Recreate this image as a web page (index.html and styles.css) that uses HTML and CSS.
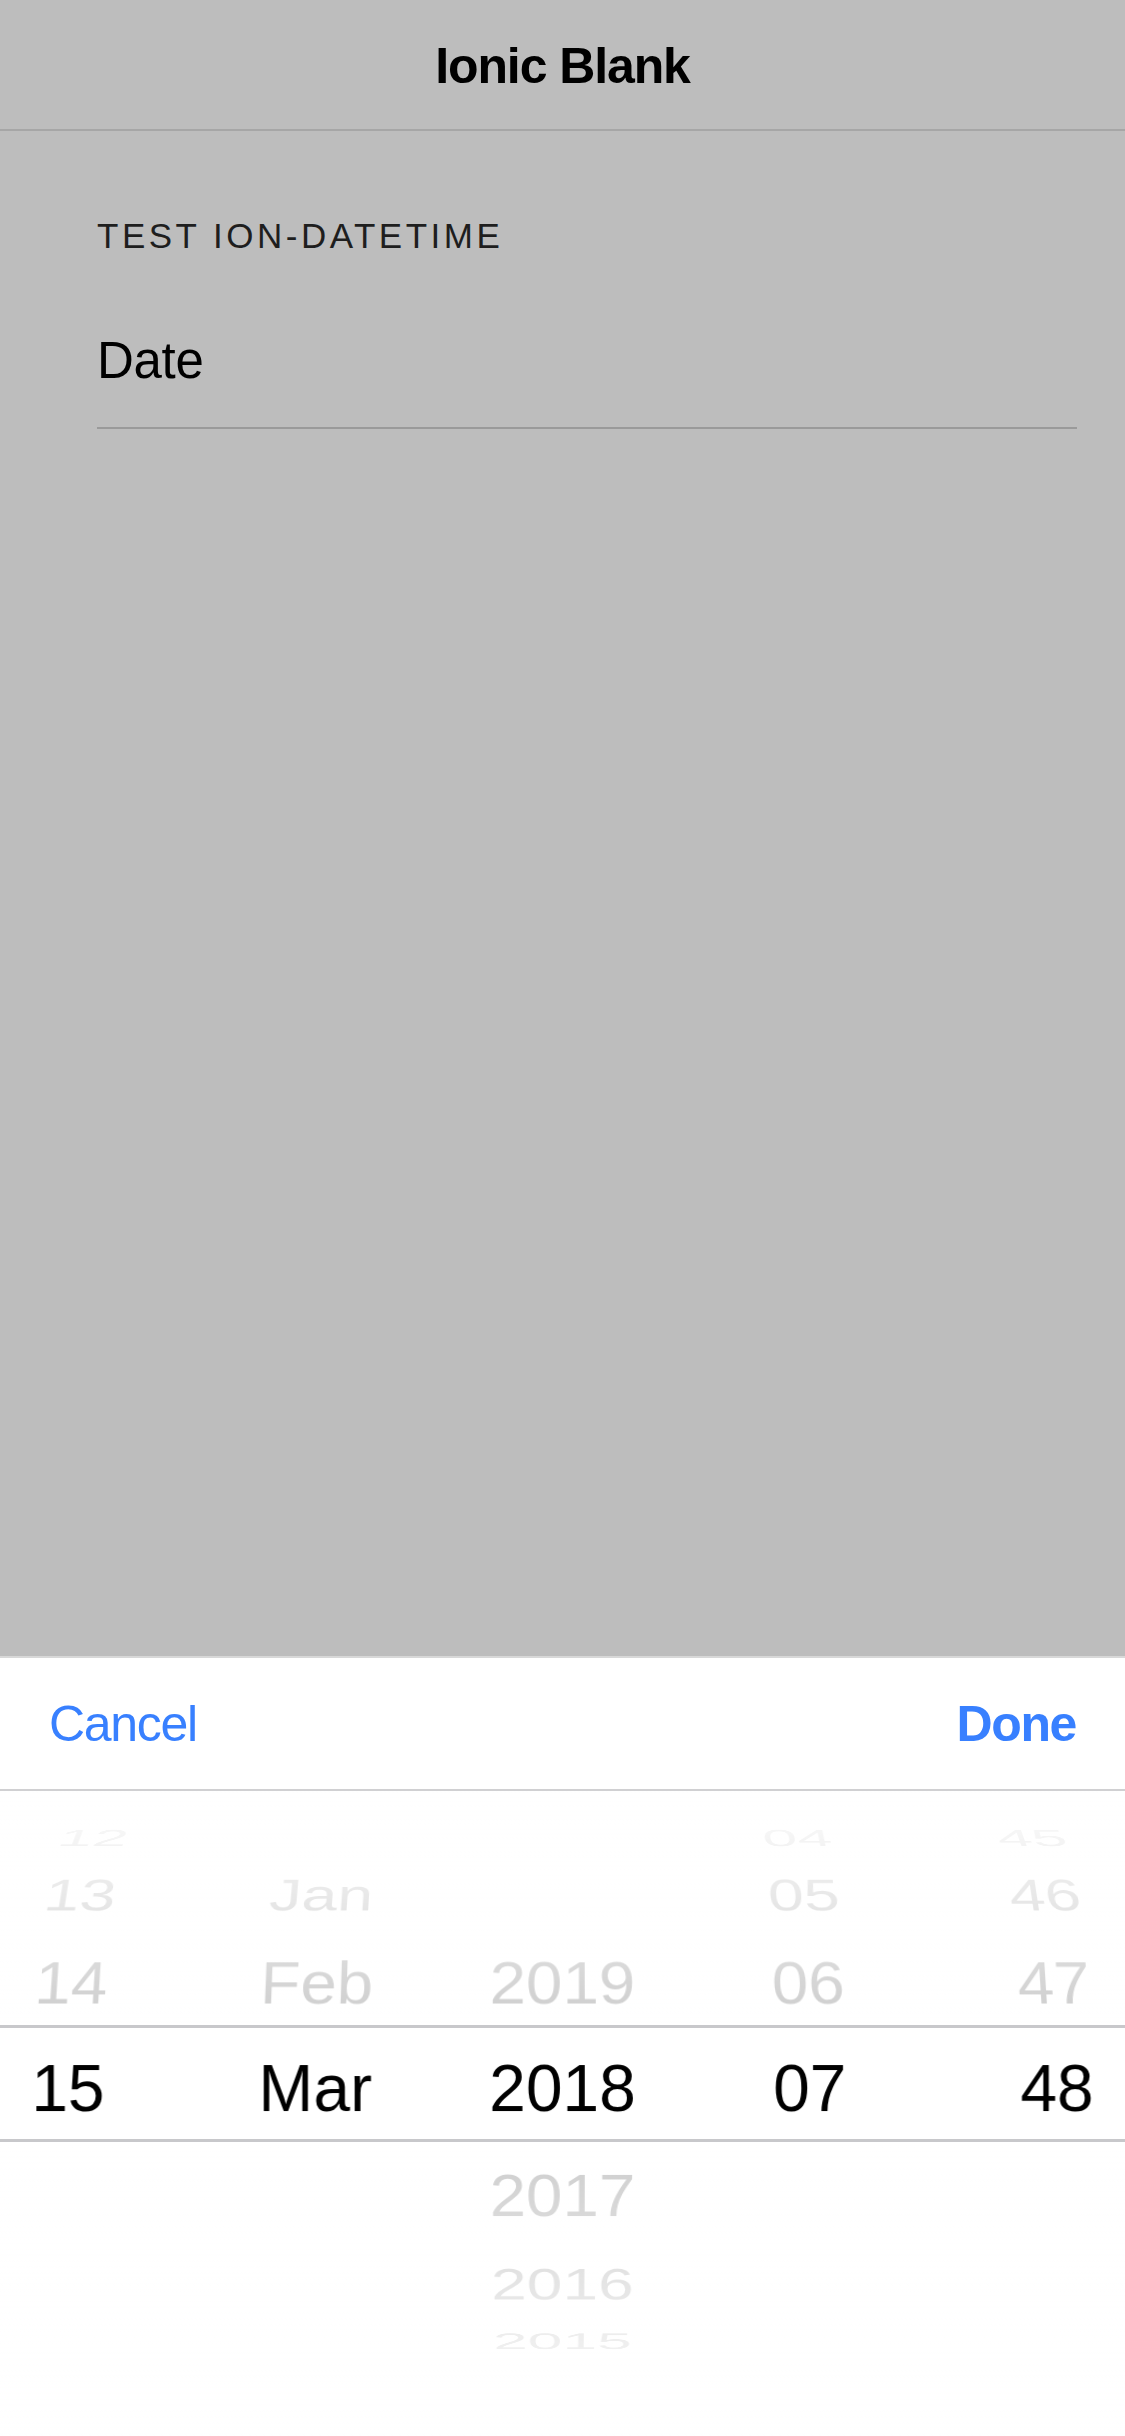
FILE: index.html
```html
<!DOCTYPE html>
<html lang="en">
<head>
<meta charset="utf-8">
<title>Ionic Blank</title>
<link rel="stylesheet" href="styles.css">
</head>
<body>
<div class="app">
  <header class="topbar">
    <h1 class="title">Ionic Blank</h1>
  </header>
  <main class="content">
    <div class="list-header">Test ion-datetime</div>
    <div class="item">
      <span class="item-label">Date</span>
    </div>
  </main>
  <section class="picker">
    <div class="picker-toolbar">
      <button class="pbtn">Cancel</button>
      <button class="pbtn pbtn-strong">Done</button>
    </div>
    <div class="wheel">
      <div class="cols">
        <div class="col">
          <div class="opt a3">12</div>
          <div class="opt a2">13</div>
          <div class="opt a1">14</div>
          <div class="opt a0">15</div>
        </div>
        <div class="col">
          <div class="opt a2">Jan</div>
          <div class="opt a1">Feb</div>
          <div class="opt a0">Mar</div>
        </div>
        <div class="col">
          <div class="opt a1">2019</div>
          <div class="opt a0">2018</div>
          <div class="opt b1">2017</div>
          <div class="opt b2">2016</div>
          <div class="opt b3">2015</div>
        </div>
        <div class="col">
          <div class="opt a3">04</div>
          <div class="opt a2">05</div>
          <div class="opt a1">06</div>
          <div class="opt a0">07</div>
        </div>
        <div class="col">
          <div class="opt a3">45</div>
          <div class="opt a2">46</div>
          <div class="opt a1">47</div>
          <div class="opt a0">48</div>
        </div>
      </div>
      <div class="shade-above"></div>
      <div class="shade-below"></div>
    </div>
  </section>
</div>
</body>
</html>
```

FILE: styles.css
```css
* { box-sizing: border-box; }

html, body {
  margin: 0;
  padding: 0;
}

body {
  width: 1125px;
  height: 2436px;
  font-family: "Liberation Sans", Arial, Helvetica, sans-serif;
  background: #bdbdbd;
  overflow: hidden;
}

.app {
  display: flex;
  flex-direction: column;
  height: 2436px;
  background: #bdbdbd;
}

.topbar {
  height: 131px;
  flex: none;
  border-bottom: 2px solid #a6a6a6;
  padding-top: 3px;
  display: flex;
  align-items: center;
  justify-content: center;
}

.title {
  margin: 0;
  font-size: 50px;
  line-height: 60px;
  font-weight: 700;
  color: #000;
  letter-spacing: -1.1px;
}

.content {
  flex: 1;
  padding-top: 85px;
}

.list-header {
  margin-left: 97px;
  font-size: 35px;
  line-height: 40px;
  height: 40px;
  text-transform: uppercase;
  letter-spacing: 3.5px;
  color: #1e1e1e;
}

.item {
  margin: 75px 48px 0 97px;
  padding-bottom: 36px;
  border-bottom: 2px solid #9a9a9a;
}

.item-label {
  display: block;
  font-size: 51px;
  line-height: 60px;
  color: #000;
  letter-spacing: -0.3px;
}

.picker {
  flex: none;
  height: 780px;
  background: #fff;
  border-top: 2px solid #d8d8d8;
  display: flex;
  flex-direction: column;
}

.picker-toolbar {
  height: 133px;
  flex: none;
  border-bottom: 2px solid #d0d0d2;
  display: flex;
  align-items: center;
  justify-content: space-between;
  padding: 0 49px 0 49px;
}

.pbtn {
  border: 0;
  background: none;
  padding: 0;
  margin: 0;
  font-family: inherit;
  font-size: 50px;
  line-height: 60px;
  color: #3880ff;
  font-weight: 400;
  letter-spacing: -1.3px;
}

.pbtn-strong {
  font-weight: 700;
  letter-spacing: -1.4px;
}

.wheel {
  flex: 1;
  position: relative;
  overflow: hidden;
}

.cols {
  display: flex;
  height: 100%;
  perspective: 3000px;
  perspective-origin: 562.5px 298px;
}

.col {
  flex: 1;
  display: grid;
  grid-template-rows: 100px;
  grid-template-columns: 1fr;
  padding-top: 248px;
  transform-style: preserve-3d;
}

.opt {
  grid-area: 1 / 1;
  height: 100px;
  font-size: 60px;
  line-height: 100px;
  text-align: center;
  color: #000;
  white-space: nowrap;
  backface-visibility: hidden;
}

.a0 { transform: rotateX(0deg) translateZ(270px); }
.a1 { transform: rotateX(21deg) translateZ(270px); }
.a2 { transform: rotateX(42deg) translateZ(270px); }
.a3 { transform: rotateX(63deg) translateZ(270px); }
.b1 { transform: rotateX(-21.3deg) translateZ(270px); }
.b2 { transform: rotateX(-42.6deg) translateZ(270px); }
.b3 { transform: rotateX(-63.9deg) translateZ(270px); }

.shade-above {
  position: absolute;
  z-index: 10;
  left: 0;
  right: 0;
  top: 0;
  height: 237px;
  border-bottom: 3px solid #c8c8cb;
  background: linear-gradient(to bottom, rgba(255, 255, 255, 1) 0%, rgba(255, 255, 255, 0.8) 100%);
}

.shade-below {
  position: absolute;
  z-index: 10;
  left: 0;
  right: 0;
  top: 348px;
  bottom: 0;
  border-top: 3px solid #c8c8cb;
  background: linear-gradient(to top, rgba(255, 255, 255, 1) 0%, rgba(255, 255, 255, 0.8) 100%);
}
```
